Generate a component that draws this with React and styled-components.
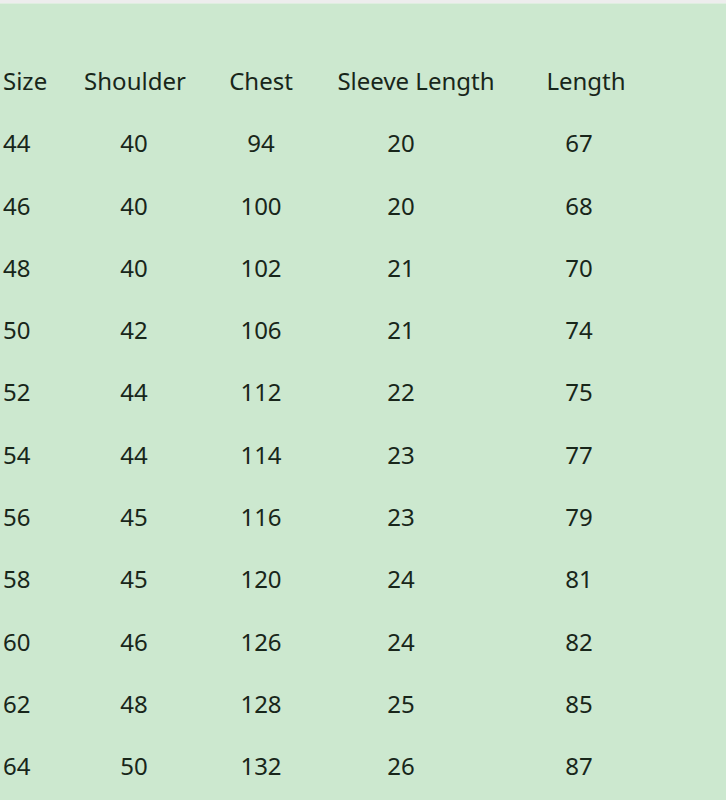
import React from "react";
import styled, { createGlobalStyle } from "styled-components";

const GlobalStyle = createGlobalStyle`
  body {
    margin: 0;
    background: #cce8cf;
    font-family: "Noto Sans", "Open Sans", sans-serif;
  }
`;

const headers = ["Size", "Shoulder", "Chest", "Sleeve Length", "Length"];

// size, shoulder, chest, sleeve length, length
const rows = [
  [44, 40, 94, 20, 67],
  [46, 40, 100, 20, 68],
  [48, 40, 102, 21, 70],
  [50, 42, 106, 21, 74],
  [52, 44, 112, 22, 75],
  [54, 44, 114, 23, 77],
  [56, 45, 116, 23, 79],
  [58, 45, 120, 24, 81],
  [60, 46, 126, 24, 82],
  [62, 48, 128, 25, 85],
  [64, 50, 132, 26, 87],
];

// data cells sit a little left of their header in the last two columns
const dataShift = [0, 2, 0, 30, 14];

const App = () => {
  return (
    <Page>
      <GlobalStyle />
      <TopStrip />
      <Chart>
        {headers.map((h, i) => (
          <Cell key={h} first={i === 0}>
            {h}
          </Cell>
        ))}
        {rows.map((row) =>
          row.map((value, i) => (
            <Cell key={`${row[0]}-${i}`} first={i === 0} shift={dataShift[i]}>
              {value}
            </Cell>
          ))
        )}
      </Chart>
    </Page>
  );
};

export default App;

const Page = styled.div`
  width: 726px;
  height: 800px;
  background: #cce8cf;
  overflow: hidden;
`;

const TopStrip = styled.div`
  height: 3px;
  background: #ededed;
  border-bottom: 1px solid #dfeee0;
`;

const Chart = styled.div`
  display: grid;
  grid-template-columns: 70px 130px 122px 188px 152px;
  grid-auto-rows: 62.3px;
  padding-top: 46px;
`;

const Cell = styled.div`
  font-size: 24px;
  line-height: 62.3px;
  color: #18261a;
  white-space: nowrap;
  text-align: ${(props) => (props.first ? "left" : "center")};
  padding-left: ${(props) => (props.first ? "3px" : "0")};
  padding-right: ${(props) => (props.shift || 0)}px;
`;
